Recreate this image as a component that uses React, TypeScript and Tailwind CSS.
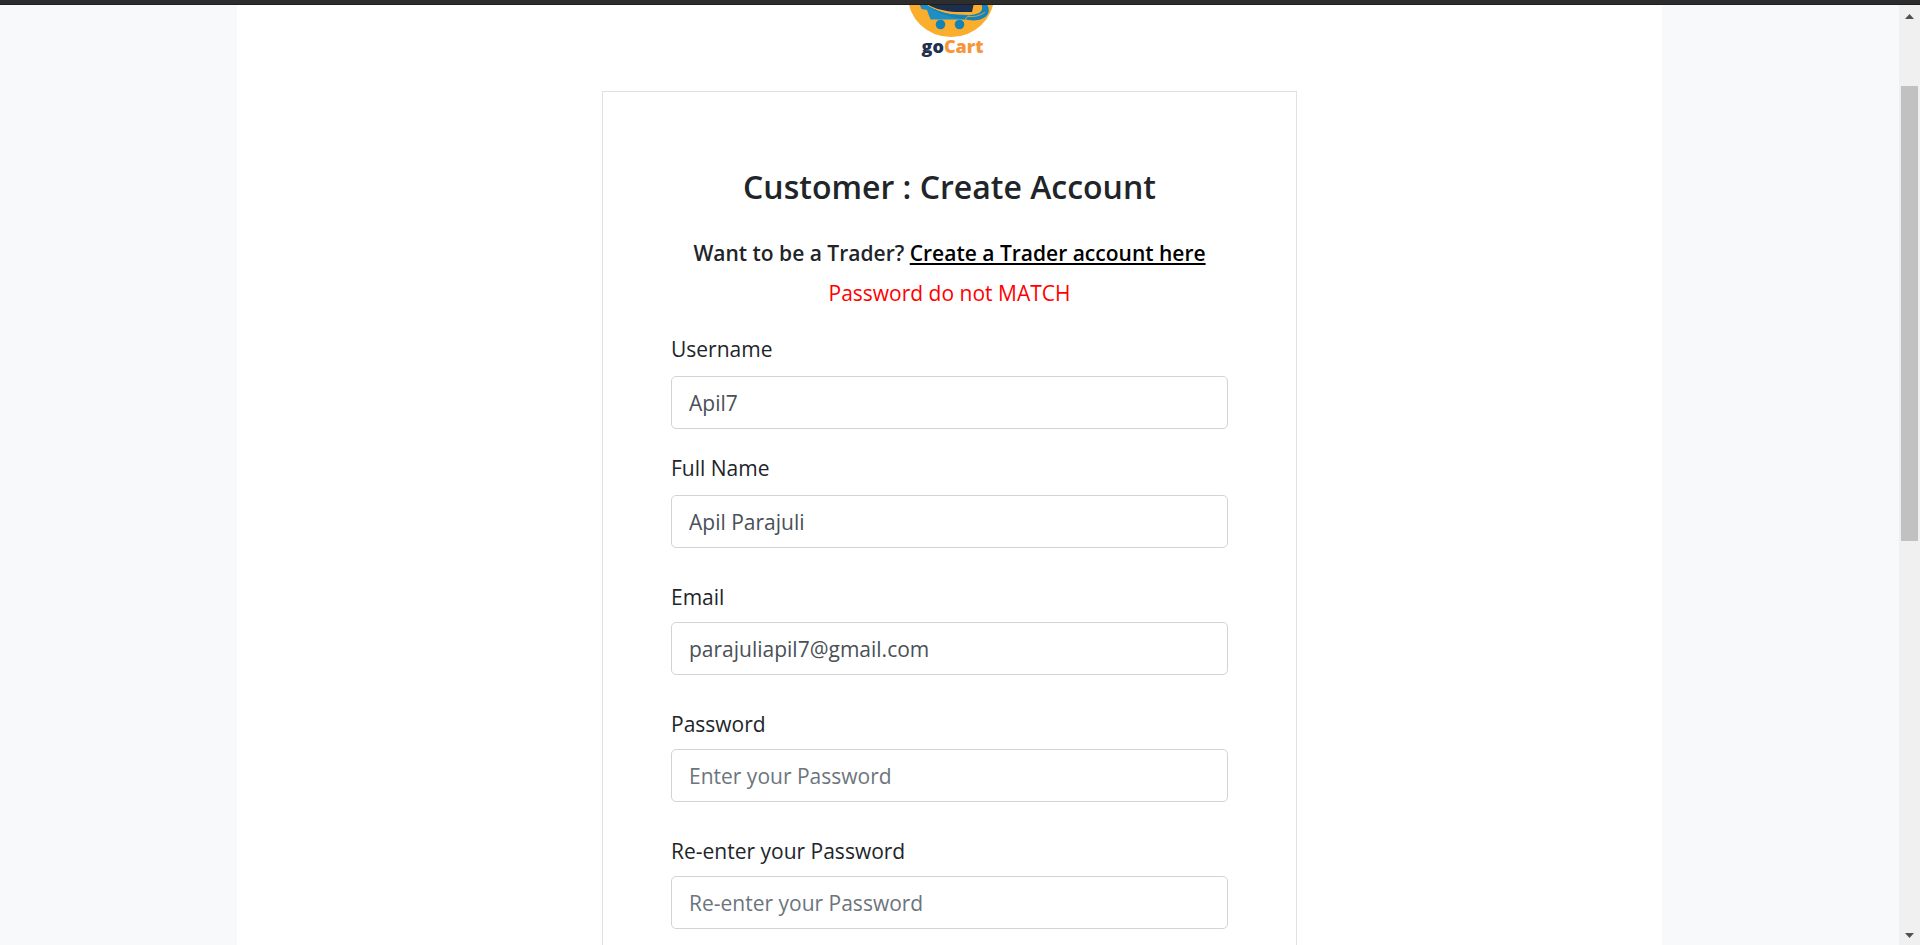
type Field = {
  id: string;
  label: string;
  type: string;
  value?: string;
  placeholder?: string;
  roomy: boolean;
};

const fields: Field[] = [
  { id: "username", label: "Username", type: "text", value: "Apil7", roomy: false },
  { id: "fullname", label: "Full Name", type: "text", value: "Apil Parajuli", roomy: false },
  { id: "email", label: "Email", type: "email", value: "parajuliapil7@gmail.com", roomy: true },
  { id: "password", label: "Password", type: "password", placeholder: "Enter your Password", roomy: true },
  { id: "confirm", label: "Re-enter your Password", type: "password", placeholder: "Re-enter your Password", roomy: true },
];

function Logo() {
  return (
    <svg viewBox="0 5 120 59" className="h-[59px] w-[120px] shrink-0" role="img" aria-label="goCart">
      <ellipse cx="61" cy="-4" rx="43" ry="41" fill="#fbae2c" />
      <path d="M29 3 L31.500 9 L37 10 L40.500 19.500 L75 19.500 L78 15 L60 14 C50 12 42 9 36 4 Z" fill="#1c8fc4" />
      <path d="M38 6 C52 14 70 17 84 14.500 C91 13 94 10 91 3 L96 3 C102 11 98 18 88 20 C83 21 78 20 76 19.500 C62 18 46 13 38 6 Z" fill="#1483bd" />
      <path d="M75 19.500 L77.500 16.500 C84 17 90 16 95 12" stroke="#fbae2c" strokeWidth="0.800" fill="none" />
      <path d="M36 3 L84 3 L82 12 L66 12 C54 11 43 9 36 3 Z" fill="#1d2f4f" />
      <circle cx="50.500" cy="24.500" r="4.800" fill="#1583b8" />
      <circle cx="69.500" cy="24.500" r="4.800" fill="#1583b8" />
      <text x="62.500" y="53" textAnchor="middle" fontFamily="Open Sans, sans-serif" fontWeight="800" fontSize="18">
        <tspan fill="#22304f">go</tspan>
        <tspan fill="#f7953b">Cart</tspan>
      </text>
    </svg>
  );
}

function FormField({ field }: { field: Field }) {
  return (
    <div className={field.roomy ? "pt-8" : "pt-6"}>
      <label htmlFor={field.id} className={field.roomy ? "block pb-2 leading-[34px]" : "block pb-3 leading-[30px]"}>
        {field.label}
      </label>
      <input
        id={field.id}
        type={field.type}
        defaultValue={field.value}
        placeholder={field.placeholder}
        className="block h-[53px] w-full rounded-[5px] border border-[#ced4da] bg-white px-[17px] text-[#495057] placeholder:text-[#6c757d] placeholder:opacity-100"
      />
    </div>
  );
}

export default function App() {
  return (
    <div className="flex h-screen flex-col overflow-hidden bg-[#f8f9fb] font-['Open_Sans','Noto_Sans',sans-serif] text-[21px] text-[#212529]">
      <div className="h-[5px] shrink-0 border-b border-[#1e1e1e] bg-[#2d2d2d]" />
      <div className="flex min-h-0 flex-1">
        <main className="flex min-w-0 flex-1 justify-center overflow-hidden">
          <div className="flex w-3/4 flex-col items-center bg-white">
            <Logo />
            <section className="mt-[27px] w-full max-w-[695px] shrink-0 border border-[#dee2e6] px-[68px] pb-16 pt-[72px]">
              <h1 className="text-center text-[32px] font-semibold leading-[46px]">Customer : Create Account</h1>
              <p className="mt-7 text-center font-semibold leading-[30px]">
                Want to be a Trader?{" "}
                <a href="#trader" className="text-black underline decoration-2 underline-offset-2">
                  Create a Trader account here
                </a>
              </p>
              <p className="mt-[10px] text-center leading-[30px] text-[#ff0000]">Password do not MATCH</p>
              <form className="pt-[2px]">
                {fields.map((field) => (
                  <FormField key={field.id} field={field} />
                ))}
              </form>
            </section>
          </div>
        </main>
        <aside className="flex w-[21px] shrink-0 flex-col items-center justify-between bg-[#f0f0f0]">
          <button type="button" aria-label="Scroll up" className="flex h-[23px] w-full items-center justify-center">
            <svg viewBox="0 0 9 5" className="h-[5px] w-[9px]" fill="#505050">
              <path d="M0 5 L4.500 0 L9 5 Z" />
            </svg>
          </button>
          <div className="flex w-full flex-1 flex-col px-[2px]">
            <div className="flex-[58]" />
            <div className="flex-[455] bg-[#c1c1c1]" />
            <div className="flex-[385]" />
          </div>
          <button type="button" aria-label="Scroll down" className="flex h-[19px] w-full items-center justify-center">
            <svg viewBox="0 0 9 5" className="h-[5px] w-[9px]" fill="#505050">
              <path d="M0 0 L9 0 L4.500 5 Z" />
            </svg>
          </button>
        </aside>
      </div>
    </div>
  );
}
